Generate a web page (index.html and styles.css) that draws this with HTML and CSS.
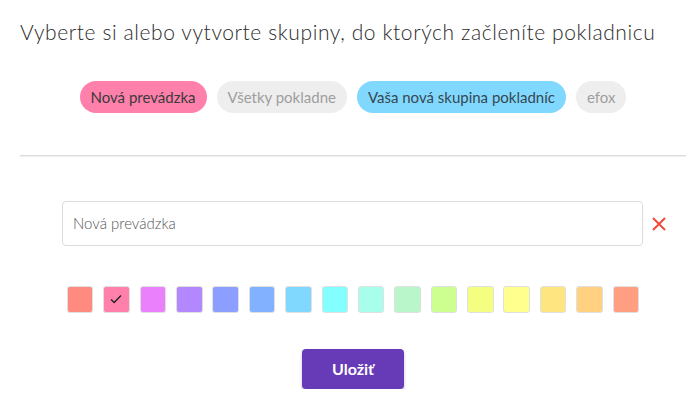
FILE: index.html
```html
<!DOCTYPE html>
<html lang="sk">
<head>
<meta charset="utf-8">
<title>Skupiny</title>
<link rel="stylesheet" href="styles.css">
</head>
<body>
<div class="page">
  <h1 class="title">Vyberte si alebo vytvorte skupiny, do ktorých začleníte pokladnicu</h1>
  <div class="chips">
    <span class="chip chip-pink">Nová prevádzka</span>
    <span class="chip chip-gray">Všetky pokladne</span>
    <span class="chip chip-blue">Vaša nová skupina pokladníc</span>
    <span class="chip chip-gray">efox</span>
  </div>
  <hr class="divider">
  <div class="form-row">
    <div class="input">Nová prevádzka</div>
    <button class="remove" aria-label="Odstrániť">
      <svg width="14" height="14" viewBox="0 0 14 14"><path d="M1 1 L13 13 M13 1 L1 13" stroke="#f44336" stroke-width="1.8" fill="none"/></svg>
    </button>
  </div>
  <div class="swatches">
    <span class="swatch" style="background:#ff8a80"></span>
    <span class="swatch" style="background:#ff80ab"><svg width="12" height="10" viewBox="0 0 12 10"><path d="M1 5.5 L4.2 8.5 L11 1.5" stroke="#222" stroke-width="1.4" fill="none"/></svg></span>
    <span class="swatch" style="background:#ea80fc"></span>
    <span class="swatch" style="background:#b388ff"></span>
    <span class="swatch" style="background:#8c9eff"></span>
    <span class="swatch" style="background:#82b1ff"></span>
    <span class="swatch" style="background:#80d8ff"></span>
    <span class="swatch" style="background:#84ffff"></span>
    <span class="swatch" style="background:#a7ffeb"></span>
    <span class="swatch" style="background:#b9f6ca"></span>
    <span class="swatch" style="background:#ccff90"></span>
    <span class="swatch" style="background:#f4ff81"></span>
    <span class="swatch" style="background:#ffff8d"></span>
    <span class="swatch" style="background:#ffe57f"></span>
    <span class="swatch" style="background:#ffd180"></span>
    <span class="swatch" style="background:#ff9e80"></span>
  </div>
  <div class="actions">
    <button class="save">Uložiť</button>
  </div>
</div>
</body>
</html>
```

FILE: styles.css
```css
html, body {
  margin: 0;
  padding: 0;
  background: #ffffff;
}
body {
  font-family: Lato, "Noto Sans", sans-serif;
  color: #333;
}
.page {
  padding: 0 14px 0 20px;
}
.title {
  margin: 18px 0 0 0;
  font-size: 21px;
  line-height: 28px;
  font-weight: 300;
  letter-spacing: 0.6px;
  color: #2b2b2b;
  white-space: nowrap;
}
.chips {
  margin-top: 35px;
  display: flex;
  justify-content: center;
  gap: 10px;
}
.chip {
  height: 32px;
  line-height: 32px;
  padding: 0 11px;
  border-radius: 16px;
  font-size: 15px;
  white-space: nowrap;
}
.chip-pink { background: #ff80ab; color: #3a3a3a; }
.chip-gray { background: #eeeeee; color: #9e9e9e; }
.chip-blue { background: #80d8ff; color: #37474f; }
.divider {
  margin: 42px 0 0 0;
  border: 0;
  border-top: 1px solid #dddddd;
  height: 1px;
  background: #eeeeee;
}
.form-row {
  margin-top: 44px;
  display: flex;
  align-items: center;
  padding-left: 42px;
}
.input {
  width: 581px;
  height: 45px;
  box-sizing: border-box;
  border: 1px solid #dcdcdc;
  border-radius: 4px;
  padding: 0 10px;
  line-height: 43px;
  font-size: 15px;
  font-weight: 300;
  color: #555;
}
.remove {
  margin-left: 9px;
  padding: 0;
  border: 0;
  background: none;
  width: 14px;
  height: 14px;
  display: flex;
}
.swatches {
  margin-top: 40px;
  display: flex;
  justify-content: center;
  gap: 9.8px;
}
.swatch {
  width: 26.6px;
  height: 26.6px;
  box-sizing: border-box;
  border: 1px solid #e0e0e0;
  border-radius: 3px;
  display: flex;
  align-items: center;
  justify-content: center;
}
.actions {
  margin-top: 36px;
  display: flex;
  justify-content: center;
}
.save {
  width: 102px;
  height: 40px;
  border: 0;
  border-radius: 4px;
  background: #673ab7;
  color: #ffffff;
  font-family: Lato, "Noto Sans", sans-serif;
  font-weight: 700;
  font-size: 16px;
  box-shadow: 0 2px 3px rgba(0,0,0,0.25);
}
```
